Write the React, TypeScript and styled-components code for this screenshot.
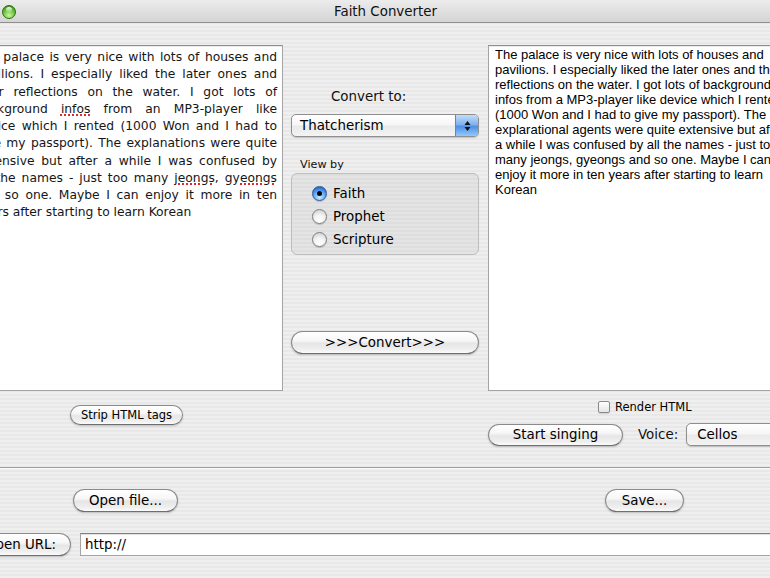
import React from 'react';
import styled, { createGlobalStyle } from 'styled-components';

const GlobalStyle = createGlobalStyle`
  html, body {
    margin: 0;
    padding: 0;
    width: 770px;
    height: 578px;
    overflow: hidden;
    background: #ececec;
  }
  #root {
    width: 770px;
    height: 578px;
    overflow: hidden;
  }
`;

const UI = `"DejaVu Sans", "Liberation Sans", sans-serif`;

const Window = styled.div`
  margin-left: -50px;
  width: 871px;
  height: 578px;
  font-family: ${UI};
  color: #000;
  background: repeating-linear-gradient(
    to bottom,
    #efefef 0px,
    #efefef 2px,
    #e8e8e8 2px,
    #e8e8e8 4px
  );
`;

const TitleBar = styled.div`
  height: 22px;
  border-bottom: 1px solid #8f8f8f;
  background: linear-gradient(to bottom, #ececec, #d4d4d4);
  display: grid;
  grid-template-columns: 1fr auto 1fr;
  align-items: center;
`;

const Lights = styled.div`
  display: flex;
  gap: 7px;
  padding-left: 10px;
  margin-top: 1px;
`;

const Light = styled.span<{ $c1: string; $c2: string; $rim: string }>`
  width: 14px;
  height: 14px;
  border-radius: 50%;
  box-sizing: border-box;
  border: 1px solid ${(p) => p.$rim};
  background: radial-gradient(circle at 50% 78%, ${(p) => p.$c1} 0%, ${(p) => p.$c2} 65%, ${(p) => p.$rim} 100%);
  position: relative;
  &::after {
    content: '';
    position: absolute;
    left: 3px;
    right: 3px;
    top: 1px;
    height: 5px;
    border-radius: 50%;
    background: linear-gradient(rgba(255, 255, 255, 0.95), rgba(255, 255, 255, 0.15));
  }
`;

const Title = styled.div`
  font-size: 13.4px;
  margin-top: 1px;
  color: #111;
`;

const Row = styled.div<{ $mt?: number; $h?: number; $pl?: number; $center?: boolean }>`
  display: flex;
  padding: 0 14px 0 ${(p) => p.$pl ?? 14}px;
  margin-top: ${(p) => p.$mt ?? 0}px;
  height: ${(p) => (p.$h ? `${p.$h}px` : 'auto')};
  align-items: ${(p) => (p.$center ? 'center' : 'flex-start')};
`;

const Col = styled.div<{ $w: number; $ml?: number }>`
  width: ${(p) => p.$w}px;
  margin-left: ${(p) => p.$ml ?? 0}px;
  box-sizing: border-box;
  display: flex;
  flex-direction: column;
  align-items: flex-start;
  flex-shrink: 0;
`;

const TextBox = styled.div`
  width: 100%;
  height: 346px;
  box-sizing: border-box;
  background: #fff;
  border: 1px solid #a4a4a4;
  border-top-color: #8c8c8c;
  box-shadow: inset 0 1px 1px rgba(0, 0, 0, 0.08);
  overflow: hidden;
`;

const LeftText = styled.div`
  padding: 3px 5px 0 10px;
  font-family: "DejaVu Sans", sans-serif;
  font-size: 12.3px;
  line-height: 17.25px;
  color: #161616;
`;

const JLine = styled.div<{ $last?: boolean }>`
  white-space: nowrap;
  text-align: justify;
  text-align-last: ${(p) => (p.$last ? 'left' : 'justify')};
`;

const Misspelt = styled.span`
  text-decoration: underline dotted #e02a2a;
  text-decoration-thickness: 2px;
  text-underline-offset: 2px;
`;

const RightText = styled.div`
  padding: 1px 0 0 6px;
  font-family: "Liberation Sans", Arial, sans-serif;
  font-size: 13px;
  line-height: 15px;
  color: #000;
  white-space: nowrap;
`;

const Label = styled.div<{ $size: number; $mt?: number; $mb?: number; $pl?: number; $lh?: number }>`
  font-size: ${(p) => p.$size}px;
  line-height: ${(p) => p.$lh ?? 16}px;
  margin-top: ${(p) => p.$mt ?? 0}px;
  margin-bottom: ${(p) => p.$mb ?? 0}px;
  padding-left: ${(p) => p.$pl ?? 0}px;
  color: #111;
  white-space: nowrap;
`;

const Popup = styled.div<{ $w: number; $pl: number; $ml?: number }>`
  display: flex;
  align-items: center;
  width: ${(p) => p.$w}px;
  height: 23px;
  box-sizing: border-box;
  margin-left: ${(p) => p.$ml ?? 0}px;
  padding-left: ${(p) => p.$pl}px;
  border: 1px solid #8e8e8e;
  border-radius: 5px;
  background: linear-gradient(to bottom, #ffffff 0%, #f6f6f6 48%, #e9e9e9 52%, #f4f4f4 100%);
  box-shadow: 0 1px 1px rgba(0, 0, 0, 0.18);
  overflow: hidden;
  font-size: 13.4px;
  flex-shrink: 0;
`;

const PopupText = styled.span`
  flex: 1;
  white-space: nowrap;
`;

const PopupCap = styled.span`
  width: 22px;
  align-self: stretch;
  display: flex;
  align-items: center;
  justify-content: center;
  border-left: 1px solid #5c86c4;
  background: linear-gradient(to bottom, #c3dcf8 0%, #7fb3ef 45%, #4f90e6 55%, #94c9fb 100%);
`;

const Group = styled.div`
  width: 188px;
  height: 82px;
  box-sizing: border-box;
  border: 1px solid #bdbdbd;
  border-radius: 6px;
  background: rgba(0, 0, 0, 0.045);
  padding: 8px 0 0 20px;
  display: flex;
  flex-direction: column;
`;

const RadioRow = styled.label`
  display: flex;
  align-items: center;
  gap: 6px;
  height: 23px;
  font-size: 13.4px;
`;

const Radio = styled.span<{ $on?: boolean }>`
  width: 15px;
  height: 15px;
  box-sizing: border-box;
  border-radius: 50%;
  border: 1px solid ${(p) => (p.$on ? '#2d5694' : '#7f7f7f')};
  background: ${(p) =>
    p.$on
      ? 'radial-gradient(circle at 50% 80%, #cfeaff 0%, #74b4f6 40%, #3478da 75%, #24549e 100%)'
      : 'radial-gradient(circle at 50% 80%, #ffffff 0%, #f3f3f3 45%, #c9c9c9 100%)'};
  box-shadow: 0 1px 1px rgba(0, 0, 0, 0.18);
  display: flex;
  align-items: center;
  justify-content: center;
  &::after {
    content: '';
    width: 5px;
    height: 5px;
    border-radius: 50%;
    background: ${(p) => (p.$on ? '#0a0a0a' : 'transparent')};
  }
`;

const Button = styled.button<{ $w: number; $h?: number; $fs?: number; $mt?: number; $ml?: number }>`
  width: ${(p) => p.$w}px;
  height: ${(p) => p.$h ?? 23}px;
  margin-top: ${(p) => p.$mt ?? 0}px;
  margin-left: ${(p) => p.$ml ?? 0}px;
  padding: 0;
  box-sizing: border-box;
  border: 1px solid #8a8a8a;
  border-bottom-color: #6f6f6f;
  border-radius: 12px;
  background: linear-gradient(to bottom, #ffffff 0%, #f7f7f7 40%, #e6e6e6 55%, #f0f0f0 85%, #fbfbfb 100%);
  box-shadow: 0 1px 2px rgba(0, 0, 0, 0.22);
  font-family: ${UI};
  font-size: ${(p) => p.$fs ?? 13.4}px;
  color: #000;
  white-space: nowrap;
  flex-shrink: 0;
`;

const CheckRow = styled.label`
  display: flex;
  align-items: center;
  gap: 5px;
  margin-top: 10px;
  margin-left: 110px;
  height: 12px;
  font-size: 11.5px;
`;

const Check = styled.span`
  width: 12px;
  height: 12px;
  box-sizing: border-box;
  border: 1px solid #8a8a8a;
  border-radius: 2px;
  background: linear-gradient(to bottom, #ffffff, #e6e6e6);
  box-shadow: 0 1px 1px rgba(0, 0, 0, 0.12);
`;

const ControlRow = styled.div`
  display: flex;
  align-items: center;
  height: 23px;
  margin-top: 10px;
`;

const Separator = styled.div`
  height: 0;
  border-top: 1px solid #9e9e9e;
  border-bottom: 1px solid #fafafa;
`;

const UrlField = styled.div`
  flex: 1;
  height: 23px;
  box-sizing: border-box;
  margin-left: 9px;
  padding-left: 4px;
  border: 1px solid #a4a4a4;
  border-top-color: #7e7e7e;
  background: #fff;
  box-shadow: inset 0 1px 1px rgba(0, 0, 0, 0.12);
  display: flex;
  align-items: center;
  font-size: 13.4px;
`;

const Arrows = () => (
  <svg width="7" height="12" viewBox="0 0 7 12">
    <path d="M0.5 5 L3.5 1 L6.5 5 Z" fill="#111" />
    <path d="M0.5 7 L3.5 11 L6.5 7 Z" fill="#111" />
  </svg>
);

const leftLines: React.ReactNode[] = [
  'The palace is very nice with lots of houses and',
  'pavilions. I especially liked the later ones and',
  'their reflections on the water. I got lots of',
  <>background <Misspelt>infos</Misspelt> from an MP3-player like</>,
  'device which I rented (1000 Won and I had to',
  'give my passport). The explanations were quite',
  'extensive but after a while I was confused by',
  <>all the names - just too many <Misspelt>jeongs</Misspelt>, <Misspelt>gyeongs</Misspelt></>,
  'and so one. Maybe I can enjoy it more in ten',
  'years after starting to learn Korean',
];

const rightLines = [
  'The palace is very nice with lots of houses and',
  'pavilions. I especially liked the later ones and their',
  'reflections on the water. I got lots of background',
  'infos from a MP3-player like device which I rented',
  '(1000 Won and I had to give my passport). The',
  'explarational agents were quite extensive but after',
  'a while I was confused by all the names - just too',
  'many jeongs, gyeongs and so one. Maybe I can',
  'enjoy it more in ten years after starting to learn',
  'Korean',
];

export default function App() {
  return (
    <>
      <GlobalStyle />
      <Window>
        <TitleBar>
          <Lights>
            <Light $c1="#ffb0a0" $c2="#e2412c" $rim="#8e2315" />
            <Light $c1="#ffe9a0" $c2="#e9a91f" $rim="#946a12" />
            <Light $c1="#c8f79a" $c2="#55b42a" $rim="#2e6e15" />
          </Lights>
          <Title>Faith Converter</Title>
          <div />
        </TitleBar>

        <Row $mt={22}>
          <Col $w={319}>
            <TextBox>
              <LeftText>
                {leftLines.map((l, i) => (
                  <JLine key={i} $last={i === leftLines.length - 1}>
                    {l}
                  </JLine>
                ))}
              </LeftText>
            </TextBox>
          </Col>
          <Col $w={188} $ml={8}>
            <Label $size={13.4} $mt={44} $mb={9} $pl={40}>
              Convert to:
            </Label>
            <Popup $w={188} $pl={8}>
              <PopupText>Thatcherism</PopupText>
              <PopupCap>
                <Arrows />
              </PopupCap>
            </Popup>
            <Label $size={11.2} $lh={14} $mt={21} $mb={1} $pl={9}>
              View by
            </Label>
            <Group>
              <RadioRow>
                <Radio $on />
                Faith
              </RadioRow>
              <RadioRow>
                <Radio />
                Prophet
              </RadioRow>
              <RadioRow>
                <Radio />
                Scripture
              </RadioRow>
            </Group>
            <Button $w={188} $mt={76}>
              &gt;&gt;&gt;Convert&gt;&gt;&gt;
            </Button>
          </Col>
          <Col $w={319} $ml={9}>
            <TextBox>
              <RightText>
                {rightLines.map((l, i) => (
                  <div key={i}>{l}</div>
                ))}
              </RightText>
            </TextBox>
          </Col>
        </Row>

        <Row $h={76}>
          <Col $w={319}>
            <Button $w={113} $h={20} $fs={11.5} $mt={14} $ml={106}>
              Strip HTML tags
            </Button>
          </Col>
          <Col $w={188} $ml={8} />
          <Col $w={319} $ml={9}>
            <CheckRow>
              <Check />
              Render HTML
            </CheckRow>
            <ControlRow>
              <Button $w={135} $h={22}>
                Start singing
              </Button>
              <Label $size={13.4} $pl={15}>
                Voice:
              </Label>
              <Popup $w={140} $pl={10} $ml={8}>
                <PopupText>Cellos</PopupText>
              </Popup>
            </ControlRow>
          </Col>
        </Row>

        <Separator />

        <Row $mt={20}>
          <Col $w={319}>
            <Button $w={105} $ml={109}>
              Open file...
            </Button>
          </Col>
          <Col $w={188} $ml={8} />
          <Col $w={319} $ml={9}>
            <Button $w={79} $ml={117}>
              Save...
            </Button>
          </Col>
        </Row>

        <Row $mt={21} $pl={20} $center>
          <Button $w={101}>Open URL:</Button>
          <UrlField>http://</UrlField>
        </Row>
      </Window>
    </>
  );
}
